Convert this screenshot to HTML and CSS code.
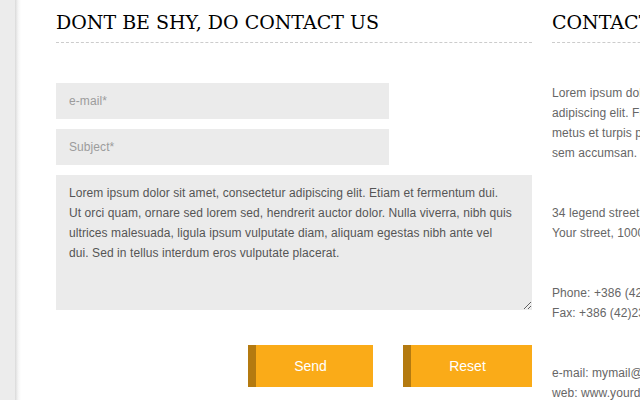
FILE: index.html
```
<!DOCTYPE html>
<html lang="en">
<head>
    <meta charset="UTF-8">
    <title>Contact</title>
    <link rel="stylesheet" href="styles.css">
</head>
<body>
<div class="page">
    <div class="content">
        <!-- contact form -->
        <section class="contact-form">
            <h2>Dont be shy, do contact us</h2>
            <form>
                <input type="text" class="field" placeholder="e-mail*">
                <input type="text" class="field" placeholder="Subject*">
                <textarea class="message">Lorem ipsum dolor sit amet, consectetur adipiscing elit. Etiam et fermentum dui.
Ut orci quam, ornare sed lorem sed, hendrerit auctor dolor. Nulla viverra, nibh quis
ultrices malesuada, ligula ipsum vulputate diam, aliquam egestas nibh ante vel
dui. Sed in tellus interdum eros vulputate placerat.</textarea>
                <div class="buttons">
                    <button type="button" class="btn btn-send">Send</button>
                    <button type="reset" class="btn btn-reset">Reset</button>
                </div>
            </form>
        </section>

        <!-- contact info -->
        <section class="contact-info">
            <h2>Contact info</h2>
            <p>Lorem ipsum dolor sit amet, consectetur<br>adipiscing elit. Fusce vel lectus at<br>metus et turpis pharetra tincidunt<br>sem accumsan.</p>
            <p>34 legend street<br>Your street, 1000 Your city</p>
            <p>Phone: +386 (42) 234 567<br>Fax: +386 (42)234 568</p>
            <p>e-mail: mymail@yourdomain.com<br>web: www.yourdomain.com</p>
        </section>
    </div>
</div>
</body>
</html>
```

FILE: styles.css
```
html, body {
    margin: 0;
    height: 100%;
    overflow: hidden;
}

body {
    background-color: #ececec;
    font-family: "Liberation Sans", Arial, sans-serif;
    font-size: 12px;
    line-height: 20px;
    letter-spacing: 0.08px;
    color: #666;
}

/* white sheet with a soft edge on the left */
.page {
    margin-left: 15px;
    min-height: 100%;
    background: linear-gradient(to right, #d9d9d9, #f4f4f4 3px, #fff 6px);
}

.content {
    display: flex;
    gap: 20px;
    padding-left: 41px;
}

h2 {
    margin: 0;
    padding: 8px 0 6px;
    font-family: "DejaVu Serif", Georgia, serif;
    font-size: 19px;
    font-weight: normal;
    line-height: 28px;
    letter-spacing: 0;
    text-transform: uppercase;
    color: #000;
    border-bottom: 1px dashed #ccc;
    white-space: nowrap;
}

/* Form */
.contact-form {
    flex: 0 0 476px;
}

.contact-form form {
    display: flex;
    flex-direction: column;
    align-items: flex-start;
    gap: 10px;
    margin-top: 40px;
}

.field,
.message {
    box-sizing: border-box;
    border: none;
    outline: none;
    background-color: #ebebeb;
    font-family: inherit;
    font-size: 12px;
    letter-spacing: inherit;
    color: #555;
}

.field {
    width: 333px;
    height: 36px;
    padding: 0 13px;
}

.field::placeholder {
    color: #9c9c9c;
}

.message {
    width: 476px;
    height: 135px;
    padding: 8px 10px 8px 13px;
    line-height: 20px;
    resize: both;
}

.buttons {
    align-self: stretch;
    display: flex;
    justify-content: flex-end;
    gap: 30px;
    margin-top: 25px;
}

.btn {
    height: 42px;
    border: none;
    background-color: #faab18;
    box-shadow: inset 8px 0 0 #b47a10;
    color: #fff;
    font-family: inherit;
    font-size: 14px;
    letter-spacing: 0;
    cursor: pointer;
}

.btn-send {
    width: 125px;
}

.btn-reset {
    width: 129px;
}

/* Info column */
.contact-info {
    flex: 0 0 260px;
}

.contact-info h2 {
    margin-bottom: 40px;
}

.contact-info p {
    margin: 0 0 40px;
    white-space: nowrap;
}
```
